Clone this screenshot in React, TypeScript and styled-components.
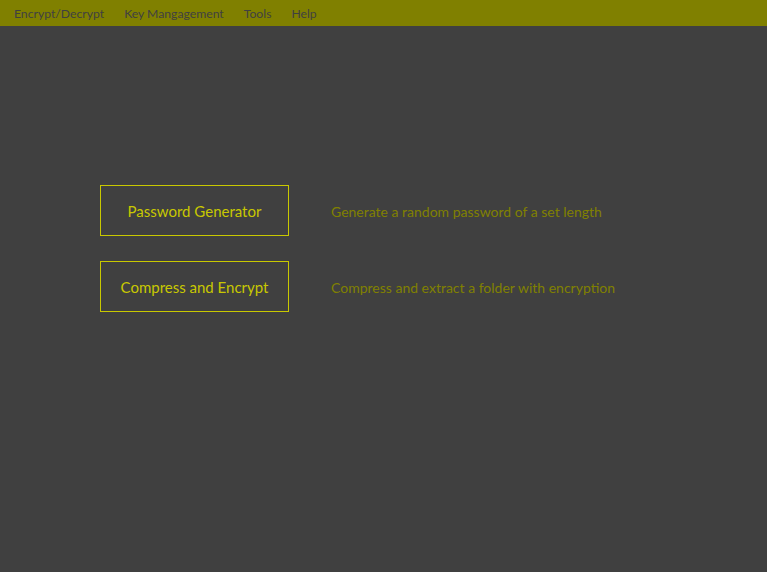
import React from 'react'
import styled, { createGlobalStyle } from 'styled-components'

const GlobalStyle = createGlobalStyle`
  html, body {
    margin: 0;
    padding: 0;
    height: 100%;
    background: #404040;
  }

  #root {
    height: 100%;
  }
`

const StyledWindow = styled.div`
  display: flex;
  flex-direction: column;

  height: 100vh;

  background: #404040;
  font-family: Lato, 'Open Sans', sans-serif;
`

const StyledMenuBar = styled.nav`
  display: flex;
  align-items: center;
  gap: 20px;

  box-sizing: border-box;
  height: 26px;
  padding: 2px 14px 0;

  background: #808000;
`

const StyledMenuItem = styled.span`
  color: #404040;

  font-size: 12.2px;
  line-height: 24px;
`

const StyledContent = styled.main`
  display: grid;
  grid-template-columns: 189px auto;
  grid-auto-rows: 51px;
  column-gap: 42px;
  row-gap: 25px;
  align-items: center;
  align-content: start;

  padding: 159px 0 0 100px;
`

const StyledToolButton = styled.button`
  box-sizing: border-box;

  height: 51px;
  width: 189px;

  border: 1px solid #c8c800;
  background: transparent;
  color: #c8c800;

  font-family: inherit;
  font-size: 15px;
`

const StyledDescription = styled.p`
  margin: 0;
  padding-top: 2px;

  color: #808000;

  font-size: 14px;
`

const menus = ['Encrypt/Decrypt', 'Key Mangagement', 'Tools', 'Help']

const tools = [
  {
    label: 'Password Generator',
    description: 'Generate a random password of a set length',
  },
  {
    label: 'Compress and Encrypt',
    description: 'Compress and extract a folder with encryption',
  },
]

const App: React.FC = () => (
  <>
    <GlobalStyle />
    <StyledWindow>
      <StyledMenuBar>
        {menus.map(menu => (
          <StyledMenuItem key={menu}>{menu}</StyledMenuItem>
        ))}
      </StyledMenuBar>
      <StyledContent>
        {tools.map(tool => (
          <React.Fragment key={tool.label}>
            <StyledToolButton>{tool.label}</StyledToolButton>
            <StyledDescription>{tool.description}</StyledDescription>
          </React.Fragment>
        ))}
      </StyledContent>
    </StyledWindow>
  </>
)

export default App
